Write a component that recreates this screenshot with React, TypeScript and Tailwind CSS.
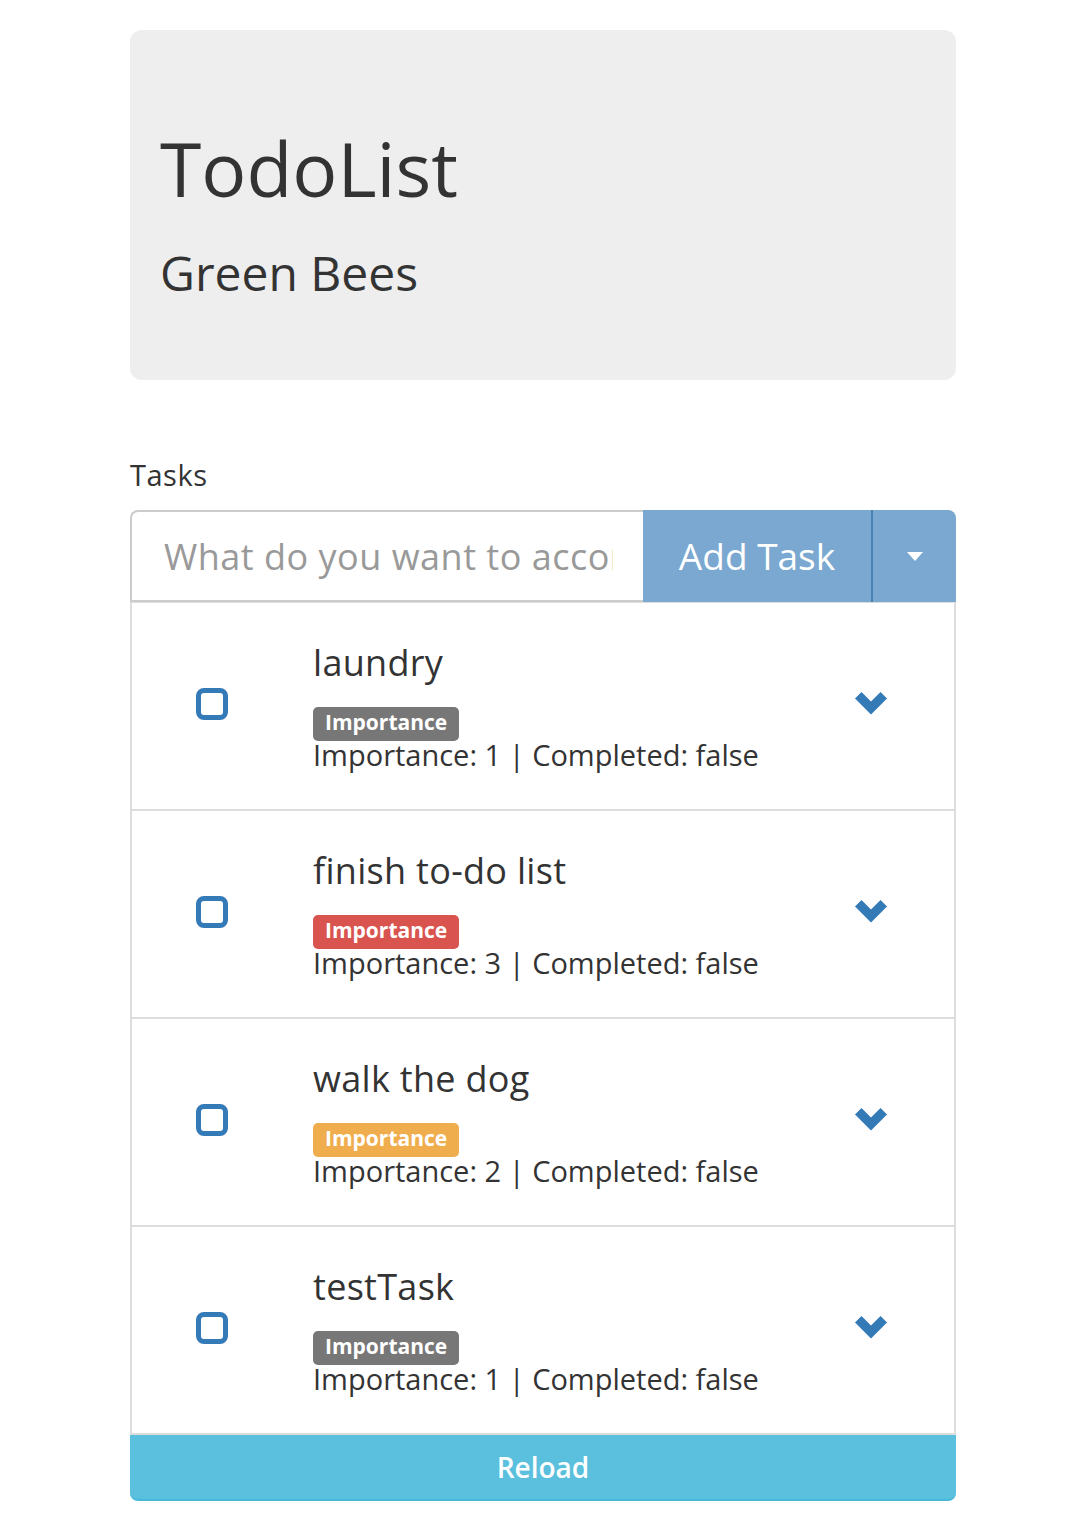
const tasks = [
  { name: "laundry", importance: 1, badge: "bg-[#777777]" },
  { name: "finish to-do list", importance: 3, badge: "bg-[#d9534f]" },
  { name: "walk the dog", importance: 2, badge: "bg-[#f0ad4e]" },
  { name: "testTask", importance: 1, badge: "bg-[#777777]" },
];

function Chevron() {
  return (
    <svg width="32" height="23" viewBox="0 0 32 23" className="text-[#337ab7] -mt-[6px]">
      <polygon points="0,6.5 6.5,0 16,9.5 25.5,0 32,6.5 16,22.5" fill="currentColor" />
    </svg>
  );
}

function TaskItem({ task }: { task: (typeof tasks)[number] }) {
  return (
    <li className="h-[208px] border-x-2 border-b-2 border-[#dddddd] bg-white flex items-center pl-[64px] pr-[67px]">
      <div className="w-[32px] h-[32px] border-[5px] border-[#337ab7] rounded-[8px] shrink-0 -mt-[4px]" />
      <div className="ml-[85px] flex-1 flex flex-col items-start">
        <h4 className="text-[36px] leading-[40px] text-[#333333] tracking-[0.3px]">{task.name}</h4>
        <span
          className={`mt-[24px] h-[34px] leading-[30px] px-[12px] rounded-[5px] text-white font-bold text-[21px] ${task.badge}`}
        >
          Importance
        </span>
        <p className="text-[29px] leading-[28px] text-[#333333]">
          Importance: {task.importance} | Completed: false
        </p>
      </div>
      <Chevron />
    </li>
  );
}

export default function App() {
  return (
    <div className="min-h-[1538px] bg-white font-['Open_Sans',sans-serif] text-[#333333]">
      <div className="ml-[130px] w-[826px] pt-[30px]">
        <div className="bg-[#eeeeee] rounded-[12px] pl-[30px] pt-[93px] pb-[78px]">
          <h1 className="text-[75px] leading-[90px] font-normal">TodoList</h1>
          <h3 className="mt-[31px] text-[48px] leading-[58px] font-normal">Green Bees</h3>
        </div>

        <label className="block mt-[75px] mb-[15px] text-[29px] leading-[40px] tracking-[0.5px]">Tasks</label>

        <div className="flex h-[92px]">
          <input
            type="text"
            placeholder="What do you want to accomplish?"
            className="flex-1 min-w-0 h-full border-2 border-r-0 border-[#cccccc] rounded-tl-[8px] pl-[32px] pr-[30px] text-[36px] tracking-[0.5px] text-[#555555] placeholder:text-[#999999] outline-none"
          />
          <button className="w-[230px] h-full bg-[#7aa8d0] text-white text-[37px] border-r-2 border-[#4a80b5]">
            Add Task
          </button>
          <button className="w-[83px] h-full bg-[#7aa8d0] rounded-tr-[8px] flex items-center justify-center">
            <svg width="16" height="9" viewBox="0 0 16 9">
              <polygon points="0,0 16,0 8,9" fill="white" />
            </svg>
          </button>
        </div>

        <ul className="border-t-2 border-[#dddddd] -mt-[1px]">
          {tasks.map((t) => (
            <TaskItem key={t.name} task={t} />
          ))}
        </ul>

        <button className="w-full h-[66px] bg-[#5bc0de] border-b-2 border-[#46b8da] rounded-b-[8px] text-white text-[28px] font-semibold">
          Reload
        </button>
      </div>
    </div>
  );
}
